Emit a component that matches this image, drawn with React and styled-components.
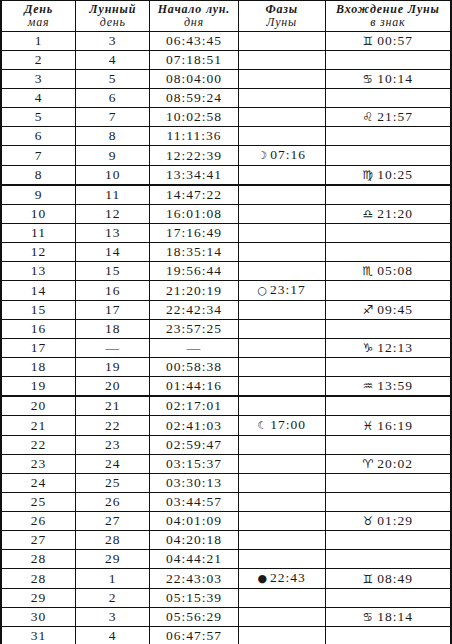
import styled, { createGlobalStyle } from "styled-components";

const rows = [
  ["1", "3", "06:43:45", null, ["♊", "00:57"]],
  ["2", "4", "07:18:51"],
  ["3", "5", "08:04:00", null, ["♋", "10:14"]],
  ["4", "6", "08:59:24"],
  ["5", "7", "10:02:58", null, ["♌", "21:57"]],
  ["6", "8", "11:11:36"],
  ["7", "9", "12:22:39", ["☽", "07:16"]],
  ["8", "10", "13:34:41", null, ["♍", "10:25"], true],
  ["9", "11", "14:47:22"],
  ["10", "12", "16:01:08", null, ["♎", "21:20"]],
  ["11", "13", "17:16:49"],
  ["12", "14", "18:35:14"],
  ["13", "15", "19:56:44", null, ["♏", "05:08"]],
  ["14", "16", "21:20:19", ["○", "23:17"]],
  ["15", "17", "22:42:34", null, ["♐", "09:45"]],
  ["16", "18", "23:57:25"],
  ["17", "—", "—", null, ["♑", "12:13"]],
  ["18", "19", "00:58:38"],
  ["19", "20", "01:44:16", null, ["♒", "13:59"], true],
  ["20", "21", "02:17:01"],
  ["21", "22", "02:41:03", ["☾", "17:00"], ["♓", "16:19"]],
  ["22", "23", "02:59:47"],
  ["23", "24", "03:15:37", null, ["♈", "20:02"]],
  ["24", "25", "03:30:13"],
  ["25", "26", "03:44:57"],
  ["26", "27", "04:01:09", null, ["♉", "01:29"]],
  ["27", "28", "04:20:18"],
  ["28", "29", "04:44:21"],
  ["28", "1", "22:43:03", ["●", "22:43"], ["♊", "08:49"]],
  ["29", "2", "05:15:39"],
  ["30", "3", "05:56:29", null, ["♋", "18:14"]],
  ["31", "4", "06:47:57"],
];

const headers = [
  ["День", "мая"],
  ["Лунный", "день"],
  ["Начало лун.", "дня"],
  ["Фазы", "Луны"],
  ["Вхождение Луны", "в знак"],
];

const widths = [74, 74, 88, 87, 124];

function Marked({ value, phase }) {
  if (!value) return null;
  return (
    <>
      <Sign $phase={phase}>{value[0] + "\uFE0E"}</Sign>
      {value[1]}
    </>
  );
}

export default function App() {
  return (
    <>
      <Global />
      <Table>
        <colgroup>
          {widths.map((w, i) => (
            <col key={i} style={{ width: w }} />
          ))}
        </colgroup>
        <thead>
          <tr>
            {headers.map(([a, b]) => (
              <Head key={a}>
                <HeadLine $bold>{a}</HeadLine>
                <HeadLine>{b}</HeadLine>
              </Head>
            ))}
          </tr>
        </thead>
        <tbody>
          {rows.map(([day, lunar, start, phase, sign, thick], i) => (
            <tr key={i}>
              <Cell $thick={thick}>{day}</Cell>
              <Cell $thick={thick}>{lunar}</Cell>
              <Cell $thick={thick}>{start}</Cell>
              <Cell $thick={thick}>
                <Marked value={phase} phase />
              </Cell>
              <Cell $thick={thick}>
                <Marked value={sign} />
              </Cell>
            </tr>
          ))}
        </tbody>
      </Table>
    </>
  );
}

const Global = createGlobalStyle`
  body {
    margin: 0;
    background: #fff;
  }
`;

const Table = styled.table`
  width: 452px;
  table-layout: fixed;
  border-collapse: separate;
  border-spacing: 0;
  border-top: 1px solid #111;
  border-left: 2px solid #111;
  border-right: 2px solid #111;
  border-bottom: 1px solid #111;
  font-family: "Liberation Serif", "DejaVu Serif", serif;
  color: #1a1a1a;
`;

const Head = styled.th`
  height: 30px;
  padding: 0;
  border-right: 1px solid #111;
  border-bottom: 1px solid #111;
  text-align: center;
  vertical-align: middle;
  font-style: italic;
  font-weight: normal;
  font-size: 12px;
  line-height: 13.5px;
  letter-spacing: 0.8px;

  &:last-child {
    border-right: none;
  }
`;

const HeadLine = styled.div`
  font-weight: ${(p) => (p.$bold ? 700 : 400)};
`;

const Cell = styled.td`
  height: 18px;
  padding: 0;
  border-right: 1px solid #111;
  border-bottom: ${(p) => (p.$thick ? "2px" : "1px")} solid #111;
  text-align: center;
  vertical-align: middle;
  font-size: 13.5px;
  line-height: 18px;
  letter-spacing: 1px;
  white-space: nowrap;

  &:last-child {
    border-right: none;
  }
`;

const Sign = styled.span`
  display: inline-block;
  margin-right: ${(p) => (p.$phase ? "3px" : "4px")};
  font-family: "DejaVu Sans", sans-serif;
  font-size: ${(p) => (p.$phase ? "11px" : "12px")};
  letter-spacing: 0;
`;
